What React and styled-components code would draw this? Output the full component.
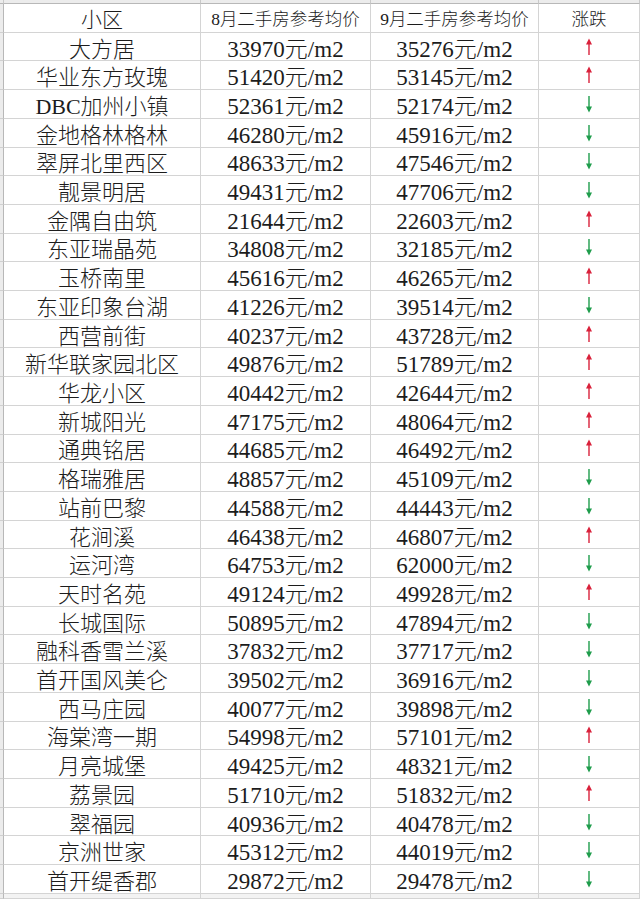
import React from 'react';
import styled, { createGlobalStyle } from 'styled-components';

const GlobalStyle = createGlobalStyle`
  html, body {
    margin: 0;
    padding: 0;
    background: #ffffff;
    overflow: hidden;
  }
`;

const rows = [
  ['大方居', 33970, 35276],
  ['华业东方玫瑰', 51420, 53145],
  ['DBC加州小镇', 52361, 52174],
  ['金地格林格林', 46280, 45916],
  ['翠屏北里西区', 48633, 47546],
  ['靓景明居', 49431, 47706],
  ['金隅自由筑', 21644, 22603],
  ['东亚瑞晶苑', 34808, 32185],
  ['玉桥南里', 45616, 46265],
  ['东亚印象台湖', 41226, 39514],
  ['西营前街', 40237, 43728],
  ['新华联家园北区', 49876, 51789],
  ['华龙小区', 40442, 42644],
  ['新城阳光', 47175, 48064],
  ['通典铭居', 44685, 46492],
  ['格瑞雅居', 48857, 45109],
  ['站前巴黎', 44588, 44443],
  ['花涧溪', 46438, 46807],
  ['运河湾', 64753, 62000],
  ['天时名苑', 49124, 49928],
  ['长城国际', 50895, 47894],
  ['融科香雪兰溪', 37832, 37717],
  ['首开国风美仑', 39502, 36916],
  ['西马庄园', 40077, 39898],
  ['海棠湾一期', 54998, 57101],
  ['月亮城堡', 49425, 48321],
  ['荔景园', 51710, 51832],
  ['翠福园', 40936, 40478],
  ['京洲世家', 45312, 44019],
  ['首开缇香郡', 29872, 29478],
];

const Sheet = styled.div`
  width: 640px;
  height: 899px;
  overflow: hidden;
  display: grid;
  grid-template-columns: 4px 197px 170px 168px 101px;
  grid-template-rows: 4px repeat(31, 28.71px) 1fr;
  font-family: "Liberation Serif", "Noto Sans CJK SC", serif;
  font-weight: 300;
  color: #1c1c1c;
`;

const ColHead = styled.div`
  background: #ececec;
  border-right: 1px solid #c9c9c9;
  border-bottom: 1px solid #b8b8b8;
`;

const RowHead = styled.div`
  background: #ececec;
  border-right: 1px solid #b8b8b8;
  border-bottom: 1px solid #d0d0d0;
`;

const Cell = styled.div`
  box-sizing: border-box;
  border-right: 1px solid #d4d4d4;
  border-bottom: 1px solid #d4d4d4;
  display: flex;
  align-items: center;
  justify-content: center;
  white-space: nowrap;
  font-size: ${p => p.size || 22}px;
  background: ${p => (p.tail ? '#f3f3f3' : '#ffffff')};
`;

const Price = styled.span`
  font-size: 23px;
`;

const Arrow = ({ up }) => (
  <svg width="10" height="18" viewBox="0 0 10 18">
    {up ? (
      <g fill="#d9213b" stroke="#d9213b">
        <line x1="5" y1="5" x2="5" y2="17" strokeWidth="1.4" />
        <polygon points="5,0.5 2,6.5 8,6.5" stroke="none" />
      </g>
    ) : (
      <g fill="#1f9d4c" stroke="#1f9d4c">
        <line x1="5" y1="1" x2="5" y2="13" strokeWidth="1.4" />
        <polygon points="5,17.5 2,11.5 8,11.5" stroke="none" />
      </g>
    )}
  </svg>
);

export default function App() {
  return (
    <>
      <GlobalStyle />
      <Sheet>
        <ColHead />
        <ColHead />
        <ColHead />
        <ColHead />
        <ColHead />

        <RowHead />
        <Cell size={21}>小区</Cell>
        <Cell size={17.5}>8月二手房参考均价</Cell>
        <Cell size={17.5}>9月二手房参考均价</Cell>
        <Cell size={17.5}>涨跌</Cell>

        {rows.map(([name, aug, sep]) => (
          <React.Fragment key={name}>
            <RowHead />
            <Cell>{name}</Cell>
            <Cell><Price>{aug}元/m2</Price></Cell>
            <Cell><Price>{sep}元/m2</Price></Cell>
            <Cell><Arrow up={sep > aug} /></Cell>
          </React.Fragment>
        ))}

        <RowHead />
        <Cell tail />
        <Cell tail />
        <Cell tail />
        <Cell tail />
      </Sheet>
    </>
  );
}
